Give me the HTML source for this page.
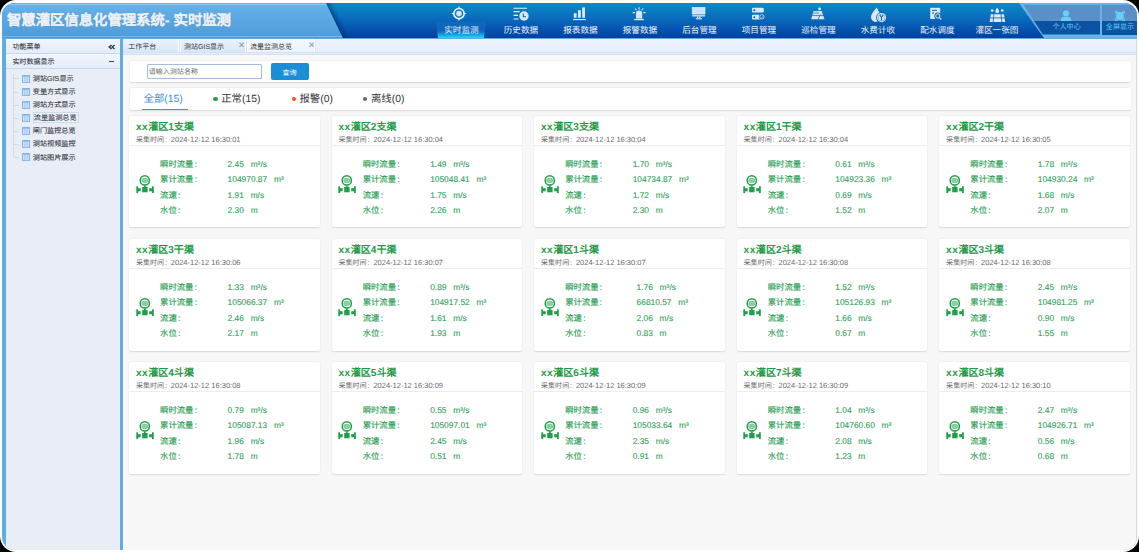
<!DOCTYPE html>
<html lang="zh-CN"><head><meta charset="utf-8">
<style>
*{box-sizing:border-box;margin:0;padding:0}
html,body{width:1139px;height:552px;overflow:hidden;background:#000;font-family:"Liberation Sans",sans-serif;text-rendering:geometricPrecision}
.abs{position:absolute}
#frame{position:absolute;left:0;top:0;width:1139px;height:552px;background:#fff;border-radius:16px}
#app{position:absolute;left:2px;top:3px;width:1135px;height:547px;border-radius:13px;overflow:hidden;background:#62ace4}
#hdr{position:absolute;left:0;top:0;width:1135px;height:35px;background:linear-gradient(#0a8cc8,#0a6abc 45%,#0040a2)}
#ttl{position:absolute;left:0;top:0;width:345px;height:35px;background:linear-gradient(#66b2ea,#4f9bd9);clip-path:polygon(0 0,324px 0,341px 35px,0 35px)}
#ttl:before{content:"";position:absolute;left:0;top:1px;width:100%;height:1px;background:#8cc8f4}
#ttl:after{content:"";position:absolute;left:0;top:32.6px;width:100%;height:1px;background:#70b8ee}
#shadow{position:absolute;left:0;top:0}
#ttxt{position:absolute;left:5px;top:6.4px;font-size:14.35px;font-weight:bold;color:#eaf0f6;white-space:nowrap;letter-spacing:0;-webkit-text-stroke:.12px #eaf0f6;text-shadow:0 0 1px rgba(40,90,150,.5)}
.nav{position:absolute;top:0;width:60px;height:35px;text-align:center;color:#eaf2fb}
.nav .t{position:absolute;left:0;width:100%;top:22.4px;font-size:8.6px;line-height:10px;white-space:nowrap}
.nav svg{position:absolute;left:21px;top:3px}
#act{position:absolute;left:434px;top:19px;width:50px;height:16px;background:linear-gradient(rgba(60,160,230,.12) 0,rgba(40,150,225,.3) 55%,#1ab4ec 86%,#10e0fb 100%);clip-path:polygon(0 0,50px 0,48px 16px,2px 16px)}
#rsec{position:absolute;left:1017px;top:0;width:118px;height:35px;background:#6ab2ea;clip-path:polygon(0 0,118px 0,118px 35px,25px 35px)}
.rp{position:absolute;top:2px;height:30px}
.rp .up{position:absolute;left:0;top:0;width:100%;height:16px;background:#5a8fc8}
.rp .dn{position:absolute;left:0;top:16px;width:100%;height:14px;background:#0c52a2}
.rp .t{position:absolute;left:0;width:100%;top:18.4px;font-size:7.1px;line-height:9px;color:#62ccf2;text-align:center;white-space:nowrap}
/* sidebar */
#side{position:absolute;left:4px;top:35.5px;width:114px;height:512px;background:#e9eef6}
.sh{position:absolute;left:0;width:114px;height:15px;background:linear-gradient(#f2f6fd,#e3ecf8);border-bottom:1px solid #c4d8f0;font-size:7px;color:#262a30;font-weight:normal;-webkit-text-stroke:0.05px #262a30}
.sh span{position:absolute;left:6.5px;top:4.3px;line-height:9px}
.tree{position:absolute;left:0;top:34px;width:114px}
.ti{position:absolute;left:14px;height:11px;font-size:7.15px;line-height:11px;color:#2e3136;white-space:nowrap;-webkit-text-stroke:.08px #2e3136}
.ti span{position:absolute;left:12.8px;top:0.8px}
.ti svg{position:absolute;left:2px;top:1.6px}
/* content */
#cont{position:absolute;left:121px;top:35.5px;width:1014px;height:512px;background:#f7f7f7;border-right:1px solid #c8dcf4}
#tabs{position:absolute;left:0;top:0;width:1013px;height:16px;background:linear-gradient(#d2e2f7,#d2e2f7) 0 13px/100% 1px no-repeat,linear-gradient(#e4edf6,#e4edf6) 0 14px/100% 1px no-repeat,linear-gradient(#d4e3f4,#d4e3f4) 0 15px/100% 1px no-repeat,linear-gradient(#ecf2fc,#e6effb) 0 0/100% 13px no-repeat}
.tab{position:absolute;top:0;height:13px;font-size:7px;line-height:9px;color:#333;white-space:nowrap}
.tab span{position:absolute;top:4px}
.tab .x{position:absolute;top:2px;font-size:7px;color:#7a9aa8}
.card{position:absolute;background:#fff;border-radius:2px;box-shadow:0 0.5px 1.5px rgba(0,0,0,.12)}
#srch{left:6.5px;top:22.4px;width:1001px;height:21px}
#inp{position:absolute;left:17.5px;top:3px;width:115px;height:15px;border:1px solid #a3bde0;border-radius:1px;background:#fff;font-size:7.1px;line-height:15.5px;color:#707070;padding-left:0.5px}
#btn{position:absolute;left:141px;top:1.8px;width:38px;height:17.5px;background:#1b8ed8;border-radius:2px;color:#fff;font-size:7.1px;line-height:20px;text-align:center}
#stat{left:6.5px;top:49.3px;width:1001px;height:22px}
.st{position:absolute;top:5.7px;font-size:10.4px;line-height:13px;color:#333;white-space:nowrap}
.dot{display:inline-block;width:4.4px;height:4.4px;border-radius:50%;vertical-align:1.5px;margin-right:3.5px}
#ul{position:absolute;left:12px;top:20.8px;width:46px;height:1.6px;background:#3a92e8}
.c{width:190.5px;height:111.3px}
.c .h{position:absolute;left:6.8px;top:4.4px;font-size:10.05px;line-height:13px;font-weight:bold;color:#1f9a48;white-space:nowrap}
.c .tm{position:absolute;left:6.8px;top:18.9px;font-size:7.05px;line-height:9px;color:#6a6a6a;white-space:nowrap}
.c .ln{position:absolute;left:0;top:28.6px;width:100%;height:1px;background:#ededed}
.c .lb{position:absolute;left:31px;font-size:8.35px;line-height:10px;color:#2c9f56;white-space:nowrap;-webkit-text-stroke:.15px #2c9f56}
.c .vl{position:absolute;left:98.5px;font-size:8.4px;line-height:10px;color:#2c9f56;white-space:nowrap;-webkit-text-stroke:.1px #2c9f56}
.c svg{position:absolute;left:6.6px;top:59.2px}
</style></head><body>
<div id="frame"></div>
<div id="app">
  <div id="hdr"></div>
  <div id="ttl"></div>
  <svg id="shadow" width="380" height="35"><polygon points="324.0,0 325.45,0 342.45,35 341.0,35" fill="rgba(0,25,85,0.42)"/><polygon points="325.4,0 326.85,0 343.85,35 342.4,35" fill="rgba(0,25,85,0.3)"/><polygon points="326.8,0 328.25,0 345.25,35 343.8,35" fill="rgba(0,25,85,0.2)"/><polygon points="328.2,0 329.65,0 346.65,35 345.2,35" fill="rgba(0,25,85,0.12)"/><polygon points="329.6,0 331.05,0 348.05,35 346.6,35" fill="rgba(0,25,85,0.05)"/></svg>
  <div id="ttxt">智慧灌区信息化管理系统- 实时监测</div>
  <div id="act"></div>
  <div class="nav" style="left:429.4px"><div class="t">实时监测</div></div>
<div class="nav" style="left:488.9px"><div class="t">历史数据</div></div>
<div class="nav" style="left:548.4px"><div class="t">报表数据</div></div>
<div class="nav" style="left:607.9px"><div class="t">报警数据</div></div>
<div class="nav" style="left:667.4px"><div class="t">后台管理</div></div>
<div class="nav" style="left:726.9px"><div class="t">项目管理</div></div>
<div class="nav" style="left:786.4px"><div class="t">巡检管理</div></div>
<div class="nav" style="left:845.9px"><div class="t">水费计收</div></div>
<div class="nav" style="left:905.4px"><div class="t">配水调度</div></div>
<div class="nav" style="left:964.9px"><div class="t">灌区一张图</div></div>

  <div id="rsec"></div>
  <div class="rp" style="left:1020px;width:78px;clip-path:polygon(1.6px 0,78px 0,78px 29.5px,20.8px 29.5px)"><div class="up"></div><div class="dn"></div><div class="t" style="left:5.6px;width:78px">个人中心</div>
</div>
<div class="rp" style="left:1100px;width:40px"><div class="up"></div><div class="dn"></div><div class="t" style="left:-2px;width:40px">全屏显示</div>
</div>

  <svg class="abs" style="left:0;top:0" width="1135" height="35"><g transform="translate(-2,-3)">
<circle cx="459" cy="13.6" r="5.1" fill="none" stroke="#e6f0fa" stroke-width="1.7"/><circle cx="459" cy="13.6" r="2.8" fill="#d2e4f6"/>
<path d="M457.9 8.6L459 6L460.1 8.6ZM457.9 18.6L459 21.2L460.1 18.6ZM454 12.5L451.3 13.6L454 14.7ZM464 12.5L466.7 13.6L464 14.7Z" fill="#e6f0fa"/>
<path d="M513.6 8.2H527M513.6 11.6H519.6M513.6 15.3H518M513.6 19H518.6" stroke="#e6f0fa" stroke-width="1.15"/>
<circle cx="524" cy="16" r="4.7" fill="#dceaf8"/><path d="M523.3 13.6V16.7H525.9" stroke="#0a62b4" stroke-width="1.1" fill="none"/>
<rect x="573.8" y="13.2" width="2.8" height="4.6" fill="#dceaf8"/><rect x="578" y="10.2" width="2.8" height="7.6" fill="#dceaf8"/><rect x="582.2" y="7.4" width="2.8" height="10.4" fill="#dceaf8"/><rect x="573" y="19" width="12.8" height="1.1" fill="#dceaf8"/>
<path d="M636 18.4V13.6A3.1 3.1 0 0 1 642.2 13.6V18.4Z" fill="#d6e7f8"/><rect x="634.2" y="18.9" width="9.6" height="1.3" fill="#e6f0fa"/>
<path d="M639.1 7.2V9.6M635.2 8.5L636.4 10.3M643 8.5L641.8 10.3M632.7 12.6H634.9M643.3 12.6H645.5" stroke="#e6f0fa" stroke-width="1.1"/>
<rect x="692.2" y="7.4" width="12.8" height="6.6" fill="#d0e4f7" stroke="#e8f2fb" stroke-width=".6"/><rect x="692.2" y="14.7" width="12.8" height="1.9" fill="#b9d6f0"/>
<rect x="697" y="16.6" width="3.6" height="1.7" fill="#dceaf8"/><rect x="698.2" y="16.9" width="1.2" height="1" fill="#1a70c0"/><rect x="695.8" y="18.2" width="6.2" height="1.1" fill="#dceaf8"/>
<rect x="752" y="7.8" width="11.8" height="4.8" rx="1.1" fill="#dceaf8"/><circle cx="754.3" cy="10.2" r="1.05" fill="#0a62b4"/>
<rect x="752" y="14.8" width="11.8" height="4.8" rx="1.1" fill="#dceaf8"/><circle cx="754.3" cy="17.2" r="1.05" fill="#0a62b4"/>
<circle cx="761.9" cy="16.8" r="3.2" fill="#0a66b6"/><circle cx="761.9" cy="16.8" r="2.2" fill="none" stroke="#dceaf8" stroke-width=".8"/><path d="M760.9 16.9l.8.8 1.4-1.5" stroke="#dceaf8" stroke-width=".6" fill="none"/>
<circle cx="819.6" cy="8.9" r="1.35" fill="#e6f0fa"/><path d="M811.2 19.2L813.4 11H821.6L824.5 19.2Z" fill="#dceaf8"/>
<path d="M811 13.1H819.2M811 15.6H824" stroke="#0a70bc" stroke-width=".8"/><path d="M821 14.3L817.6 19.6" stroke="#0a6ab8" stroke-width=".8"/><path d="M812.6 11H818.8" stroke="#0a70bc" stroke-width=".3"/>
<path d="M876.6 7.6C872.8 12.3 871 15 871 17.3A4.6 4.6 0 0 0 875.6 21.9A4.6 4.6 0 0 0 880.2 17.3C880.2 15 879.5 12.3 876.6 7.6Z" fill="#d8e8f8"/>
<circle cx="881.5" cy="17.6" r="5.4" fill="#0a68b8"/><circle cx="881.5" cy="17.6" r="4.6" fill="#dceaf8"/><circle cx="881.5" cy="17.6" r="3.4" fill="none" stroke="#3a88c8" stroke-width=".5"/>
<path d="M879.8 15.1L881.5 17.2L883.2 15.1M881.5 17V20.5" stroke="#0a68b8" stroke-width="1.15" fill="none"/>
<rect x="930.2" y="7.8" width="10" height="11.2" fill="#dceaf8"/><path d="M932 10.4H937M932 13H934.2" stroke="#0a62b4" stroke-width="1"/>
<circle cx="937.8" cy="16" r="3.5" fill="#0a6ab8"/><circle cx="937.8" cy="16" r="2.1" fill="none" stroke="#dceaf8" stroke-width="1"/><path d="M939.4 17.6L941.3 19.5" stroke="#dceaf8" stroke-width="1.1"/>
<circle cx="992.2" cy="10.5" r="1.35" fill="#dceaf8"/><circle cx="1002.2" cy="10.5" r="1.35" fill="#dceaf8"/>
<path d="M997.2 7.4C996 9 995.3 10.2 995.3 11.2A1.9 1.9 0 0 0 999.1 11.2C999.1 10.2 998.4 9 997.2 7.4Z" fill="#dceaf8"/>
<path d="M990.8 14.2H1004L1005.2 22H989.6Z" fill="#dceaf8"/><path d="M989.5 17.9H1005.4" stroke="#0a62b4" stroke-width=".8"/><path d="M993.8 14.2L993.2 22M1001 14.2L1001.8 22" stroke="#0a62b4" stroke-width=".8"/>
<circle cx="1066" cy="13.3" r="3.1" fill="#68d0f6"/><path d="M1061 21.1V19.6C1061 17.9 1062.6 16.8 1064.2 16.8H1067.9C1069.5 16.8 1071.1 17.9 1071.1 19.6V21.1Z" fill="#68d0f6"/>
<rect x="1116.2" y="12" width="7.4" height="7.8" fill="#68d0f6"/><path d="M1115.3 13.3V11.1H1117.6M1122.2 11.1H1124.5V13.3M1124.5 18.5V20.7H1122.2M1117.6 20.7H1115.3V18.5" stroke="#68d0f6" stroke-width=".9" fill="none"/>
</g></svg>
  <div id="side">
    <div class="sh" style="top:0"><span>功能菜单</span><svg class="abs" style="left:102px;top:5px" width="8" height="6" viewBox="0 0 8 6"><path d="M3.6 1L1.2 3L3.6 5M6.6 1L4.2 3L6.6 5" stroke="#1d4a56" stroke-width="1.5" fill="none"/></svg></div>
    <div class="sh" style="top:15.5px"><span>实时数据显示</span><b style="position:absolute;left:103px;top:6.5px;width:5px;height:1.5px;background:#2a4a55"></b></div>
    <div class="abs" style="left:6.5px;top:35px;width:1.2px;height:83.4px;background:#d6dbe3"></div>
<div class="abs" style="left:7.7px;top:39.9px;width:5.6px;height:1px;background:#d6dbe3"></div>
<div class="ti" style="top:34.9px"><svg width="8" height="8" viewBox="0 0 8 8"><rect x="0" y="0" width="8" height="8" rx=".5" fill="#7fb2e6"/><rect x="1" y="1.6" width="1.6" height="5.6" fill="#d2e3f6"/><rect x="3.2" y="1.6" width="1.6" height="5.6" fill="#d2e3f6"/><rect x="5.4" y="1.6" width="1.6" height="5.6" fill="#d2e3f6"/></svg><span style="">测站GIS显示</span></div>
<div class="abs" style="left:7.7px;top:53.0px;width:5.6px;height:1px;background:#d6dbe3"></div>
<div class="ti" style="top:48.0px"><svg width="8" height="8" viewBox="0 0 8 8"><rect x="0" y="0" width="8" height="8" rx=".5" fill="#7fb2e6"/><rect x="1" y="1.6" width="1.6" height="5.6" fill="#d2e3f6"/><rect x="3.2" y="1.6" width="1.6" height="5.6" fill="#d2e3f6"/><rect x="5.4" y="1.6" width="1.6" height="5.6" fill="#d2e3f6"/></svg><span style="">变量方式显示</span></div>
<div class="abs" style="left:7.7px;top:66.0px;width:5.6px;height:1px;background:#d6dbe3"></div>
<div class="ti" style="top:61.0px"><svg width="8" height="8" viewBox="0 0 8 8"><rect x="0" y="0" width="8" height="8" rx=".5" fill="#7fb2e6"/><rect x="1" y="1.6" width="1.6" height="5.6" fill="#d2e3f6"/><rect x="3.2" y="1.6" width="1.6" height="5.6" fill="#d2e3f6"/><rect x="5.4" y="1.6" width="1.6" height="5.6" fill="#d2e3f6"/></svg><span style="">测站方式显示</span></div>
<div class="abs" style="left:7.7px;top:79.1px;width:5.6px;height:1px;background:#d6dbe3"></div>
<div class="abs" style="left:27px;top:73.8px;width:46px;height:11px;background:#eef4fc;border:1px solid #c9d9ee"></div>
<div class="ti" style="top:74.1px"><svg width="8" height="8" viewBox="0 0 8 8"><rect x="0" y="0" width="8" height="8" rx=".5" fill="#7fb2e6"/><rect x="1" y="1.6" width="1.6" height="5.6" fill="#d2e3f6"/><rect x="3.2" y="1.6" width="1.6" height="5.6" fill="#d2e3f6"/><rect x="5.4" y="1.6" width="1.6" height="5.6" fill="#d2e3f6"/></svg><span style=";margin-left:1px">流量监测总览</span></div>
<div class="abs" style="left:7.7px;top:92.2px;width:5.6px;height:1px;background:#d6dbe3"></div>
<div class="ti" style="top:87.2px"><svg width="8" height="8" viewBox="0 0 8 8"><rect x="0" y="0" width="8" height="8" rx=".5" fill="#7fb2e6"/><rect x="1" y="1.6" width="1.6" height="5.6" fill="#d2e3f6"/><rect x="3.2" y="1.6" width="1.6" height="5.6" fill="#d2e3f6"/><rect x="5.4" y="1.6" width="1.6" height="5.6" fill="#d2e3f6"/></svg><span style="">闸门监控总览</span></div>
<div class="abs" style="left:7.7px;top:105.2px;width:5.6px;height:1px;background:#d6dbe3"></div>
<div class="ti" style="top:100.2px"><svg width="8" height="8" viewBox="0 0 8 8"><rect x="0" y="0" width="8" height="8" rx=".5" fill="#7fb2e6"/><rect x="1" y="1.6" width="1.6" height="5.6" fill="#d2e3f6"/><rect x="3.2" y="1.6" width="1.6" height="5.6" fill="#d2e3f6"/><rect x="5.4" y="1.6" width="1.6" height="5.6" fill="#d2e3f6"/></svg><span style="">测站视频监控</span></div>
<div class="abs" style="left:7.7px;top:118.3px;width:5.6px;height:1px;background:#d6dbe3"></div>
<div class="ti" style="top:113.3px"><svg width="8" height="8" viewBox="0 0 8 8"><rect x="0" y="0" width="8" height="8" rx=".5" fill="#7fb2e6"/><rect x="1" y="1.6" width="1.6" height="5.6" fill="#d2e3f6"/><rect x="3.2" y="1.6" width="1.6" height="5.6" fill="#d2e3f6"/><rect x="5.4" y="1.6" width="1.6" height="5.6" fill="#d2e3f6"/></svg><span style="">测站图片展示</span></div>

  </div>
  <div id="cont">
    <div id="tabs"><div class="tab" style="left:0;width:55px;background:linear-gradient(#eaf2fc,#d9e6f8)"><span style="left:5.2px">工作平台</span></div>
<div class="abs" style="left:55px;top:.5px;width:3px;height:12.8px;border-left:1px solid #fbfdff;border-right:1px solid #fbfdff;background:#d3e1f3"></div>
<div class="tab" style="left:58px;width:63.5px;background:linear-gradient(#eaf2fc,#d9e6f8)"><span style="left:3px">测站GIS显示</span></div><svg class="abs" style="left:116px;top:3.5px" width="6" height="6" viewBox="0 0 6 6"><path d="M.5 .6L4.7 4.9M4.7 .6L.5 4.9" stroke="#86a9aa" stroke-width="1.2"/></svg>
<div class="abs" style="left:121.5px;top:.5px;width:3px;height:12.8px;border-left:1px solid #fbfdff;border-right:1px solid #fbfdff;background:#d3e1f3"></div>
<div class="tab" style="left:124.5px;width:67px;background:linear-gradient(#f4f8fe,#edf3fc);border-right:1px solid #fff"><span style="left:2.5px">流量监测总览</span></div><svg class="abs" style="left:185.5px;top:3.5px" width="6" height="6" viewBox="0 0 6 6"><path d="M.5 .6L4.7 4.9M4.7 .6L.5 4.9" stroke="#86a9aa" stroke-width="1.2"/></svg>
<div class="abs" style="left:191.5px;top:0;width:1px;height:13px;background:#d8e5f5"></div>
</div>
    <div class="card" id="srch"><div id="inp">请输入测站名称</div><div id="btn">查询</div></div>
    <div class="card" id="stat">
      <div class="st" style="left:14px;color:#3a8fe6">全部(15)</div>
      <div class="st" style="left:83.8px"><i class="dot" style="background:#22a04a"></i>正常(15)</div>
      <div class="st" style="left:162px"><i class="dot" style="background:#f0521e"></i>报警(0)</div>
      <div class="st" style="left:233.5px"><i class="dot" style="background:#666"></i>离线(0)</div>
      <div id="ul"></div>
    </div>
    <div class="card c" style="left:6.10px;top:77.70px"><div class="h"><span style="letter-spacing:.55px">xx</span>灌区1支渠</div><div class="tm">采集时间<span style="margin-left:.9px">:</span><span style="font-size:7.5px;margin-left:3.9px">2024-12-12 16:30:01</span></div><div class="ln"></div><svg width="20" height="20" viewBox="0 0 20 20"><circle cx="8.8" cy="5.4" r="4.6" fill="#fff" stroke="#1ea04a" stroke-width="1.5"/><rect x="5.9" y="3.5" width="5.8" height="3.9" rx="1.3" fill="#c6e8cf" stroke="#1ea04a" stroke-width=".5"/><path d="M6.6 4.9h4.4M6.6 6.1h4.4" stroke="#1ea04a" stroke-width=".5"/><rect x="7.9" y="10.4" width="1.8" height="1.8" fill="#1ea04a"/><rect x="6.2" y="12" width="5.4" height="5.3" fill="#1ea04a"/><rect x="1.8" y="13.2" width="2.9" height="3.1" fill="#1ea04a"/><rect x="13.2" y="13.2" width="2.9" height="3.1" fill="#1ea04a"/><rect x="0.3" y="11.3" width="1.8" height="6.8" fill="#1ea04a"/><rect x="16" y="11.3" width="1.8" height="6.8" fill="#1ea04a"/></svg>
<div class="lb" style="top:42.7px">瞬时流量<span style="margin-left:1.3px">:</span></div><div class="vl" style="top:42.7px;left:98.5px">2.45&nbsp;<span style="margin-left:4.4px">m</span>³/s</div>
<div class="lb" style="top:58px">累计流量<span style="margin-left:1.3px">:</span></div><div class="vl" style="top:58px;left:98.5px">104970.87&nbsp;<span style="margin-left:4.4px">m</span>³</div>
<div class="lb" style="top:73.8px">流速<span style="margin-left:1.3px">:</span></div><div class="vl" style="top:73.8px;left:98.5px">1.91&nbsp;<span style="margin-left:4.4px">m</span>/s</div>
<div class="lb" style="top:89.2px">水位<span style="margin-left:1.3px">:</span></div><div class="vl" style="top:89.2px;left:98.5px">2.30&nbsp;<span style="margin-left:4.4px">m</span></div></div>
<div class="card c" style="left:208.65px;top:77.70px"><div class="h"><span style="letter-spacing:.55px">xx</span>灌区2支渠</div><div class="tm">采集时间<span style="margin-left:.9px">:</span><span style="font-size:7.5px;margin-left:3.9px">2024-12-12 16:30:04</span></div><div class="ln"></div><svg width="20" height="20" viewBox="0 0 20 20"><circle cx="8.8" cy="5.4" r="4.6" fill="#fff" stroke="#1ea04a" stroke-width="1.5"/><rect x="5.9" y="3.5" width="5.8" height="3.9" rx="1.3" fill="#c6e8cf" stroke="#1ea04a" stroke-width=".5"/><path d="M6.6 4.9h4.4M6.6 6.1h4.4" stroke="#1ea04a" stroke-width=".5"/><rect x="7.9" y="10.4" width="1.8" height="1.8" fill="#1ea04a"/><rect x="6.2" y="12" width="5.4" height="5.3" fill="#1ea04a"/><rect x="1.8" y="13.2" width="2.9" height="3.1" fill="#1ea04a"/><rect x="13.2" y="13.2" width="2.9" height="3.1" fill="#1ea04a"/><rect x="0.3" y="11.3" width="1.8" height="6.8" fill="#1ea04a"/><rect x="16" y="11.3" width="1.8" height="6.8" fill="#1ea04a"/></svg>
<div class="lb" style="top:42.7px">瞬时流量<span style="margin-left:1.3px">:</span></div><div class="vl" style="top:42.7px;left:98.5px">1.49&nbsp;<span style="margin-left:4.4px">m</span>³/s</div>
<div class="lb" style="top:58px">累计流量<span style="margin-left:1.3px">:</span></div><div class="vl" style="top:58px;left:98.5px">105048.41&nbsp;<span style="margin-left:4.4px">m</span>³</div>
<div class="lb" style="top:73.8px">流速<span style="margin-left:1.3px">:</span></div><div class="vl" style="top:73.8px;left:98.5px">1.75&nbsp;<span style="margin-left:4.4px">m</span>/s</div>
<div class="lb" style="top:89.2px">水位<span style="margin-left:1.3px">:</span></div><div class="vl" style="top:89.2px;left:98.5px">2.26&nbsp;<span style="margin-left:4.4px">m</span></div></div>
<div class="card c" style="left:411.20px;top:77.70px"><div class="h"><span style="letter-spacing:.55px">xx</span>灌区3支渠</div><div class="tm">采集时间<span style="margin-left:.9px">:</span><span style="font-size:7.5px;margin-left:3.9px">2024-12-12 16:30:04</span></div><div class="ln"></div><svg width="20" height="20" viewBox="0 0 20 20"><circle cx="8.8" cy="5.4" r="4.6" fill="#fff" stroke="#1ea04a" stroke-width="1.5"/><rect x="5.9" y="3.5" width="5.8" height="3.9" rx="1.3" fill="#c6e8cf" stroke="#1ea04a" stroke-width=".5"/><path d="M6.6 4.9h4.4M6.6 6.1h4.4" stroke="#1ea04a" stroke-width=".5"/><rect x="7.9" y="10.4" width="1.8" height="1.8" fill="#1ea04a"/><rect x="6.2" y="12" width="5.4" height="5.3" fill="#1ea04a"/><rect x="1.8" y="13.2" width="2.9" height="3.1" fill="#1ea04a"/><rect x="13.2" y="13.2" width="2.9" height="3.1" fill="#1ea04a"/><rect x="0.3" y="11.3" width="1.8" height="6.8" fill="#1ea04a"/><rect x="16" y="11.3" width="1.8" height="6.8" fill="#1ea04a"/></svg>
<div class="lb" style="top:42.7px">瞬时流量<span style="margin-left:1.3px">:</span></div><div class="vl" style="top:42.7px;left:98.5px">1.70&nbsp;<span style="margin-left:4.4px">m</span>³/s</div>
<div class="lb" style="top:58px">累计流量<span style="margin-left:1.3px">:</span></div><div class="vl" style="top:58px;left:98.5px">104734.87&nbsp;<span style="margin-left:4.4px">m</span>³</div>
<div class="lb" style="top:73.8px">流速<span style="margin-left:1.3px">:</span></div><div class="vl" style="top:73.8px;left:98.5px">1.72&nbsp;<span style="margin-left:4.4px">m</span>/s</div>
<div class="lb" style="top:89.2px">水位<span style="margin-left:1.3px">:</span></div><div class="vl" style="top:89.2px;left:98.5px">2.30&nbsp;<span style="margin-left:4.4px">m</span></div></div>
<div class="card c" style="left:613.75px;top:77.70px"><div class="h"><span style="letter-spacing:.55px">xx</span>灌区1干渠</div><div class="tm">采集时间<span style="margin-left:.9px">:</span><span style="font-size:7.5px;margin-left:3.9px">2024-12-12 16:30:04</span></div><div class="ln"></div><svg width="20" height="20" viewBox="0 0 20 20"><circle cx="8.8" cy="5.4" r="4.6" fill="#fff" stroke="#1ea04a" stroke-width="1.5"/><rect x="5.9" y="3.5" width="5.8" height="3.9" rx="1.3" fill="#c6e8cf" stroke="#1ea04a" stroke-width=".5"/><path d="M6.6 4.9h4.4M6.6 6.1h4.4" stroke="#1ea04a" stroke-width=".5"/><rect x="7.9" y="10.4" width="1.8" height="1.8" fill="#1ea04a"/><rect x="6.2" y="12" width="5.4" height="5.3" fill="#1ea04a"/><rect x="1.8" y="13.2" width="2.9" height="3.1" fill="#1ea04a"/><rect x="13.2" y="13.2" width="2.9" height="3.1" fill="#1ea04a"/><rect x="0.3" y="11.3" width="1.8" height="6.8" fill="#1ea04a"/><rect x="16" y="11.3" width="1.8" height="6.8" fill="#1ea04a"/></svg>
<div class="lb" style="top:42.7px">瞬时流量<span style="margin-left:1.3px">:</span></div><div class="vl" style="top:42.7px;left:98.5px">0.61&nbsp;<span style="margin-left:4.4px">m</span>³/s</div>
<div class="lb" style="top:58px">累计流量<span style="margin-left:1.3px">:</span></div><div class="vl" style="top:58px;left:98.5px">104923.36&nbsp;<span style="margin-left:4.4px">m</span>³</div>
<div class="lb" style="top:73.8px">流速<span style="margin-left:1.3px">:</span></div><div class="vl" style="top:73.8px;left:98.5px">0.69&nbsp;<span style="margin-left:4.4px">m</span>/s</div>
<div class="lb" style="top:89.2px">水位<span style="margin-left:1.3px">:</span></div><div class="vl" style="top:89.2px;left:98.5px">1.52&nbsp;<span style="margin-left:4.4px">m</span></div></div>
<div class="card c" style="left:816.30px;top:77.70px"><div class="h"><span style="letter-spacing:.55px">xx</span>灌区2干渠</div><div class="tm">采集时间<span style="margin-left:.9px">:</span><span style="font-size:7.5px;margin-left:3.9px">2024-12-12 16:30:05</span></div><div class="ln"></div><svg width="20" height="20" viewBox="0 0 20 20"><circle cx="8.8" cy="5.4" r="4.6" fill="#fff" stroke="#1ea04a" stroke-width="1.5"/><rect x="5.9" y="3.5" width="5.8" height="3.9" rx="1.3" fill="#c6e8cf" stroke="#1ea04a" stroke-width=".5"/><path d="M6.6 4.9h4.4M6.6 6.1h4.4" stroke="#1ea04a" stroke-width=".5"/><rect x="7.9" y="10.4" width="1.8" height="1.8" fill="#1ea04a"/><rect x="6.2" y="12" width="5.4" height="5.3" fill="#1ea04a"/><rect x="1.8" y="13.2" width="2.9" height="3.1" fill="#1ea04a"/><rect x="13.2" y="13.2" width="2.9" height="3.1" fill="#1ea04a"/><rect x="0.3" y="11.3" width="1.8" height="6.8" fill="#1ea04a"/><rect x="16" y="11.3" width="1.8" height="6.8" fill="#1ea04a"/></svg>
<div class="lb" style="top:42.7px">瞬时流量<span style="margin-left:1.3px">:</span></div><div class="vl" style="top:42.7px;left:98.5px">1.78&nbsp;<span style="margin-left:4.4px">m</span>³/s</div>
<div class="lb" style="top:58px">累计流量<span style="margin-left:1.3px">:</span></div><div class="vl" style="top:58px;left:98.5px">104930.24&nbsp;<span style="margin-left:4.4px">m</span>³</div>
<div class="lb" style="top:73.8px">流速<span style="margin-left:1.3px">:</span></div><div class="vl" style="top:73.8px;left:98.5px">1.68&nbsp;<span style="margin-left:4.4px">m</span>/s</div>
<div class="lb" style="top:89.2px">水位<span style="margin-left:1.3px">:</span></div><div class="vl" style="top:89.2px;left:98.5px">2.07&nbsp;<span style="margin-left:4.4px">m</span></div></div>
<div class="card c" style="left:6.10px;top:200.75px"><div class="h"><span style="letter-spacing:.55px">xx</span>灌区3干渠</div><div class="tm">采集时间<span style="margin-left:.9px">:</span><span style="font-size:7.5px;margin-left:3.9px">2024-12-12 16:30:06</span></div><div class="ln"></div><svg width="20" height="20" viewBox="0 0 20 20"><circle cx="8.8" cy="5.4" r="4.6" fill="#fff" stroke="#1ea04a" stroke-width="1.5"/><rect x="5.9" y="3.5" width="5.8" height="3.9" rx="1.3" fill="#c6e8cf" stroke="#1ea04a" stroke-width=".5"/><path d="M6.6 4.9h4.4M6.6 6.1h4.4" stroke="#1ea04a" stroke-width=".5"/><rect x="7.9" y="10.4" width="1.8" height="1.8" fill="#1ea04a"/><rect x="6.2" y="12" width="5.4" height="5.3" fill="#1ea04a"/><rect x="1.8" y="13.2" width="2.9" height="3.1" fill="#1ea04a"/><rect x="13.2" y="13.2" width="2.9" height="3.1" fill="#1ea04a"/><rect x="0.3" y="11.3" width="1.8" height="6.8" fill="#1ea04a"/><rect x="16" y="11.3" width="1.8" height="6.8" fill="#1ea04a"/></svg>
<div class="lb" style="top:42.7px">瞬时流量<span style="margin-left:1.3px">:</span></div><div class="vl" style="top:42.7px;left:98.5px">1.33&nbsp;<span style="margin-left:4.4px">m</span>³/s</div>
<div class="lb" style="top:58px">累计流量<span style="margin-left:1.3px">:</span></div><div class="vl" style="top:58px;left:98.5px">105066.37&nbsp;<span style="margin-left:4.4px">m</span>³</div>
<div class="lb" style="top:73.8px">流速<span style="margin-left:1.3px">:</span></div><div class="vl" style="top:73.8px;left:98.5px">2.46&nbsp;<span style="margin-left:4.4px">m</span>/s</div>
<div class="lb" style="top:89.2px">水位<span style="margin-left:1.3px">:</span></div><div class="vl" style="top:89.2px;left:98.5px">2.17&nbsp;<span style="margin-left:4.4px">m</span></div></div>
<div class="card c" style="left:208.65px;top:200.75px"><div class="h"><span style="letter-spacing:.55px">xx</span>灌区4干渠</div><div class="tm">采集时间<span style="margin-left:.9px">:</span><span style="font-size:7.5px;margin-left:3.9px">2024-12-12 16:30:07</span></div><div class="ln"></div><svg width="20" height="20" viewBox="0 0 20 20"><circle cx="8.8" cy="5.4" r="4.6" fill="#fff" stroke="#1ea04a" stroke-width="1.5"/><rect x="5.9" y="3.5" width="5.8" height="3.9" rx="1.3" fill="#c6e8cf" stroke="#1ea04a" stroke-width=".5"/><path d="M6.6 4.9h4.4M6.6 6.1h4.4" stroke="#1ea04a" stroke-width=".5"/><rect x="7.9" y="10.4" width="1.8" height="1.8" fill="#1ea04a"/><rect x="6.2" y="12" width="5.4" height="5.3" fill="#1ea04a"/><rect x="1.8" y="13.2" width="2.9" height="3.1" fill="#1ea04a"/><rect x="13.2" y="13.2" width="2.9" height="3.1" fill="#1ea04a"/><rect x="0.3" y="11.3" width="1.8" height="6.8" fill="#1ea04a"/><rect x="16" y="11.3" width="1.8" height="6.8" fill="#1ea04a"/></svg>
<div class="lb" style="top:42.7px">瞬时流量<span style="margin-left:1.3px">:</span></div><div class="vl" style="top:42.7px;left:98.5px">0.89&nbsp;<span style="margin-left:4.4px">m</span>³/s</div>
<div class="lb" style="top:58px">累计流量<span style="margin-left:1.3px">:</span></div><div class="vl" style="top:58px;left:98.5px">104917.52&nbsp;<span style="margin-left:4.4px">m</span>³</div>
<div class="lb" style="top:73.8px">流速<span style="margin-left:1.3px">:</span></div><div class="vl" style="top:73.8px;left:98.5px">1.61&nbsp;<span style="margin-left:4.4px">m</span>/s</div>
<div class="lb" style="top:89.2px">水位<span style="margin-left:1.3px">:</span></div><div class="vl" style="top:89.2px;left:98.5px">1.93&nbsp;<span style="margin-left:4.4px">m</span></div></div>
<div class="card c" style="left:411.20px;top:200.75px"><div class="h"><span style="letter-spacing:.55px">xx</span>灌区1斗渠</div><div class="tm">采集时间<span style="margin-left:.9px">:</span><span style="font-size:7.5px;margin-left:3.9px">2024-12-12 16:30:07</span></div><div class="ln"></div><svg width="20" height="20" viewBox="0 0 20 20"><circle cx="8.8" cy="5.4" r="4.6" fill="#fff" stroke="#1ea04a" stroke-width="1.5"/><rect x="5.9" y="3.5" width="5.8" height="3.9" rx="1.3" fill="#c6e8cf" stroke="#1ea04a" stroke-width=".5"/><path d="M6.6 4.9h4.4M6.6 6.1h4.4" stroke="#1ea04a" stroke-width=".5"/><rect x="7.9" y="10.4" width="1.8" height="1.8" fill="#1ea04a"/><rect x="6.2" y="12" width="5.4" height="5.3" fill="#1ea04a"/><rect x="1.8" y="13.2" width="2.9" height="3.1" fill="#1ea04a"/><rect x="13.2" y="13.2" width="2.9" height="3.1" fill="#1ea04a"/><rect x="0.3" y="11.3" width="1.8" height="6.8" fill="#1ea04a"/><rect x="16" y="11.3" width="1.8" height="6.8" fill="#1ea04a"/></svg>
<div class="lb" style="top:42.7px">瞬时流量<span style="margin-left:1.3px">:</span></div><div class="vl" style="top:42.7px;left:102.4px">1.76&nbsp;<span style="margin-left:4.4px">m</span>³/s</div>
<div class="lb" style="top:58px">累计流量<span style="margin-left:1.3px">:</span></div><div class="vl" style="top:58px;left:102.4px">66810.57&nbsp;<span style="margin-left:4.4px">m</span>³</div>
<div class="lb" style="top:73.8px">流速<span style="margin-left:1.3px">:</span></div><div class="vl" style="top:73.8px;left:102.4px">2.06&nbsp;<span style="margin-left:4.4px">m</span>/s</div>
<div class="lb" style="top:89.2px">水位<span style="margin-left:1.3px">:</span></div><div class="vl" style="top:89.2px;left:102.4px">0.83&nbsp;<span style="margin-left:4.4px">m</span></div></div>
<div class="card c" style="left:613.75px;top:200.75px"><div class="h"><span style="letter-spacing:.55px">xx</span>灌区2斗渠</div><div class="tm">采集时间<span style="margin-left:.9px">:</span><span style="font-size:7.5px;margin-left:3.9px">2024-12-12 16:30:08</span></div><div class="ln"></div><svg width="20" height="20" viewBox="0 0 20 20"><circle cx="8.8" cy="5.4" r="4.6" fill="#fff" stroke="#1ea04a" stroke-width="1.5"/><rect x="5.9" y="3.5" width="5.8" height="3.9" rx="1.3" fill="#c6e8cf" stroke="#1ea04a" stroke-width=".5"/><path d="M6.6 4.9h4.4M6.6 6.1h4.4" stroke="#1ea04a" stroke-width=".5"/><rect x="7.9" y="10.4" width="1.8" height="1.8" fill="#1ea04a"/><rect x="6.2" y="12" width="5.4" height="5.3" fill="#1ea04a"/><rect x="1.8" y="13.2" width="2.9" height="3.1" fill="#1ea04a"/><rect x="13.2" y="13.2" width="2.9" height="3.1" fill="#1ea04a"/><rect x="0.3" y="11.3" width="1.8" height="6.8" fill="#1ea04a"/><rect x="16" y="11.3" width="1.8" height="6.8" fill="#1ea04a"/></svg>
<div class="lb" style="top:42.7px">瞬时流量<span style="margin-left:1.3px">:</span></div><div class="vl" style="top:42.7px;left:98.5px">1.52&nbsp;<span style="margin-left:4.4px">m</span>³/s</div>
<div class="lb" style="top:58px">累计流量<span style="margin-left:1.3px">:</span></div><div class="vl" style="top:58px;left:98.5px">105126.93&nbsp;<span style="margin-left:4.4px">m</span>³</div>
<div class="lb" style="top:73.8px">流速<span style="margin-left:1.3px">:</span></div><div class="vl" style="top:73.8px;left:98.5px">1.66&nbsp;<span style="margin-left:4.4px">m</span>/s</div>
<div class="lb" style="top:89.2px">水位<span style="margin-left:1.3px">:</span></div><div class="vl" style="top:89.2px;left:98.5px">0.67&nbsp;<span style="margin-left:4.4px">m</span></div></div>
<div class="card c" style="left:816.30px;top:200.75px"><div class="h"><span style="letter-spacing:.55px">xx</span>灌区3斗渠</div><div class="tm">采集时间<span style="margin-left:.9px">:</span><span style="font-size:7.5px;margin-left:3.9px">2024-12-12 16:30:08</span></div><div class="ln"></div><svg width="20" height="20" viewBox="0 0 20 20"><circle cx="8.8" cy="5.4" r="4.6" fill="#fff" stroke="#1ea04a" stroke-width="1.5"/><rect x="5.9" y="3.5" width="5.8" height="3.9" rx="1.3" fill="#c6e8cf" stroke="#1ea04a" stroke-width=".5"/><path d="M6.6 4.9h4.4M6.6 6.1h4.4" stroke="#1ea04a" stroke-width=".5"/><rect x="7.9" y="10.4" width="1.8" height="1.8" fill="#1ea04a"/><rect x="6.2" y="12" width="5.4" height="5.3" fill="#1ea04a"/><rect x="1.8" y="13.2" width="2.9" height="3.1" fill="#1ea04a"/><rect x="13.2" y="13.2" width="2.9" height="3.1" fill="#1ea04a"/><rect x="0.3" y="11.3" width="1.8" height="6.8" fill="#1ea04a"/><rect x="16" y="11.3" width="1.8" height="6.8" fill="#1ea04a"/></svg>
<div class="lb" style="top:42.7px">瞬时流量<span style="margin-left:1.3px">:</span></div><div class="vl" style="top:42.7px;left:98.5px">2.45&nbsp;<span style="margin-left:4.4px">m</span>³/s</div>
<div class="lb" style="top:58px">累计流量<span style="margin-left:1.3px">:</span></div><div class="vl" style="top:58px;left:98.5px">104981.25&nbsp;<span style="margin-left:4.4px">m</span>³</div>
<div class="lb" style="top:73.8px">流速<span style="margin-left:1.3px">:</span></div><div class="vl" style="top:73.8px;left:98.5px">0.90&nbsp;<span style="margin-left:4.4px">m</span>/s</div>
<div class="lb" style="top:89.2px">水位<span style="margin-left:1.3px">:</span></div><div class="vl" style="top:89.2px;left:98.5px">1.55&nbsp;<span style="margin-left:4.4px">m</span></div></div>
<div class="card c" style="left:6.10px;top:323.80px"><div class="h"><span style="letter-spacing:.55px">xx</span>灌区4斗渠</div><div class="tm">采集时间<span style="margin-left:.9px">:</span><span style="font-size:7.5px;margin-left:3.9px">2024-12-12 16:30:08</span></div><div class="ln"></div><svg width="20" height="20" viewBox="0 0 20 20"><circle cx="8.8" cy="5.4" r="4.6" fill="#fff" stroke="#1ea04a" stroke-width="1.5"/><rect x="5.9" y="3.5" width="5.8" height="3.9" rx="1.3" fill="#c6e8cf" stroke="#1ea04a" stroke-width=".5"/><path d="M6.6 4.9h4.4M6.6 6.1h4.4" stroke="#1ea04a" stroke-width=".5"/><rect x="7.9" y="10.4" width="1.8" height="1.8" fill="#1ea04a"/><rect x="6.2" y="12" width="5.4" height="5.3" fill="#1ea04a"/><rect x="1.8" y="13.2" width="2.9" height="3.1" fill="#1ea04a"/><rect x="13.2" y="13.2" width="2.9" height="3.1" fill="#1ea04a"/><rect x="0.3" y="11.3" width="1.8" height="6.8" fill="#1ea04a"/><rect x="16" y="11.3" width="1.8" height="6.8" fill="#1ea04a"/></svg>
<div class="lb" style="top:42.7px">瞬时流量<span style="margin-left:1.3px">:</span></div><div class="vl" style="top:42.7px;left:98.5px">0.79&nbsp;<span style="margin-left:4.4px">m</span>³/s</div>
<div class="lb" style="top:58px">累计流量<span style="margin-left:1.3px">:</span></div><div class="vl" style="top:58px;left:98.5px">105087.13&nbsp;<span style="margin-left:4.4px">m</span>³</div>
<div class="lb" style="top:73.8px">流速<span style="margin-left:1.3px">:</span></div><div class="vl" style="top:73.8px;left:98.5px">1.96&nbsp;<span style="margin-left:4.4px">m</span>/s</div>
<div class="lb" style="top:89.2px">水位<span style="margin-left:1.3px">:</span></div><div class="vl" style="top:89.2px;left:98.5px">1.78&nbsp;<span style="margin-left:4.4px">m</span></div></div>
<div class="card c" style="left:208.65px;top:323.80px"><div class="h"><span style="letter-spacing:.55px">xx</span>灌区5斗渠</div><div class="tm">采集时间<span style="margin-left:.9px">:</span><span style="font-size:7.5px;margin-left:3.9px">2024-12-12 16:30:09</span></div><div class="ln"></div><svg width="20" height="20" viewBox="0 0 20 20"><circle cx="8.8" cy="5.4" r="4.6" fill="#fff" stroke="#1ea04a" stroke-width="1.5"/><rect x="5.9" y="3.5" width="5.8" height="3.9" rx="1.3" fill="#c6e8cf" stroke="#1ea04a" stroke-width=".5"/><path d="M6.6 4.9h4.4M6.6 6.1h4.4" stroke="#1ea04a" stroke-width=".5"/><rect x="7.9" y="10.4" width="1.8" height="1.8" fill="#1ea04a"/><rect x="6.2" y="12" width="5.4" height="5.3" fill="#1ea04a"/><rect x="1.8" y="13.2" width="2.9" height="3.1" fill="#1ea04a"/><rect x="13.2" y="13.2" width="2.9" height="3.1" fill="#1ea04a"/><rect x="0.3" y="11.3" width="1.8" height="6.8" fill="#1ea04a"/><rect x="16" y="11.3" width="1.8" height="6.8" fill="#1ea04a"/></svg>
<div class="lb" style="top:42.7px">瞬时流量<span style="margin-left:1.3px">:</span></div><div class="vl" style="top:42.7px;left:98.5px">0.55&nbsp;<span style="margin-left:4.4px">m</span>³/s</div>
<div class="lb" style="top:58px">累计流量<span style="margin-left:1.3px">:</span></div><div class="vl" style="top:58px;left:98.5px">105097.01&nbsp;<span style="margin-left:4.4px">m</span>³</div>
<div class="lb" style="top:73.8px">流速<span style="margin-left:1.3px">:</span></div><div class="vl" style="top:73.8px;left:98.5px">2.45&nbsp;<span style="margin-left:4.4px">m</span>/s</div>
<div class="lb" style="top:89.2px">水位<span style="margin-left:1.3px">:</span></div><div class="vl" style="top:89.2px;left:98.5px">0.51&nbsp;<span style="margin-left:4.4px">m</span></div></div>
<div class="card c" style="left:411.20px;top:323.80px"><div class="h"><span style="letter-spacing:.55px">xx</span>灌区6斗渠</div><div class="tm">采集时间<span style="margin-left:.9px">:</span><span style="font-size:7.5px;margin-left:3.9px">2024-12-12 16:30:09</span></div><div class="ln"></div><svg width="20" height="20" viewBox="0 0 20 20"><circle cx="8.8" cy="5.4" r="4.6" fill="#fff" stroke="#1ea04a" stroke-width="1.5"/><rect x="5.9" y="3.5" width="5.8" height="3.9" rx="1.3" fill="#c6e8cf" stroke="#1ea04a" stroke-width=".5"/><path d="M6.6 4.9h4.4M6.6 6.1h4.4" stroke="#1ea04a" stroke-width=".5"/><rect x="7.9" y="10.4" width="1.8" height="1.8" fill="#1ea04a"/><rect x="6.2" y="12" width="5.4" height="5.3" fill="#1ea04a"/><rect x="1.8" y="13.2" width="2.9" height="3.1" fill="#1ea04a"/><rect x="13.2" y="13.2" width="2.9" height="3.1" fill="#1ea04a"/><rect x="0.3" y="11.3" width="1.8" height="6.8" fill="#1ea04a"/><rect x="16" y="11.3" width="1.8" height="6.8" fill="#1ea04a"/></svg>
<div class="lb" style="top:42.7px">瞬时流量<span style="margin-left:1.3px">:</span></div><div class="vl" style="top:42.7px;left:98.5px">0.96&nbsp;<span style="margin-left:4.4px">m</span>³/s</div>
<div class="lb" style="top:58px">累计流量<span style="margin-left:1.3px">:</span></div><div class="vl" style="top:58px;left:98.5px">105033.64&nbsp;<span style="margin-left:4.4px">m</span>³</div>
<div class="lb" style="top:73.8px">流速<span style="margin-left:1.3px">:</span></div><div class="vl" style="top:73.8px;left:98.5px">2.35&nbsp;<span style="margin-left:4.4px">m</span>/s</div>
<div class="lb" style="top:89.2px">水位<span style="margin-left:1.3px">:</span></div><div class="vl" style="top:89.2px;left:98.5px">0.91&nbsp;<span style="margin-left:4.4px">m</span></div></div>
<div class="card c" style="left:613.75px;top:323.80px"><div class="h"><span style="letter-spacing:.55px">xx</span>灌区7斗渠</div><div class="tm">采集时间<span style="margin-left:.9px">:</span><span style="font-size:7.5px;margin-left:3.9px">2024-12-12 16:30:09</span></div><div class="ln"></div><svg width="20" height="20" viewBox="0 0 20 20"><circle cx="8.8" cy="5.4" r="4.6" fill="#fff" stroke="#1ea04a" stroke-width="1.5"/><rect x="5.9" y="3.5" width="5.8" height="3.9" rx="1.3" fill="#c6e8cf" stroke="#1ea04a" stroke-width=".5"/><path d="M6.6 4.9h4.4M6.6 6.1h4.4" stroke="#1ea04a" stroke-width=".5"/><rect x="7.9" y="10.4" width="1.8" height="1.8" fill="#1ea04a"/><rect x="6.2" y="12" width="5.4" height="5.3" fill="#1ea04a"/><rect x="1.8" y="13.2" width="2.9" height="3.1" fill="#1ea04a"/><rect x="13.2" y="13.2" width="2.9" height="3.1" fill="#1ea04a"/><rect x="0.3" y="11.3" width="1.8" height="6.8" fill="#1ea04a"/><rect x="16" y="11.3" width="1.8" height="6.8" fill="#1ea04a"/></svg>
<div class="lb" style="top:42.7px">瞬时流量<span style="margin-left:1.3px">:</span></div><div class="vl" style="top:42.7px;left:98.5px">1.04&nbsp;<span style="margin-left:4.4px">m</span>³/s</div>
<div class="lb" style="top:58px">累计流量<span style="margin-left:1.3px">:</span></div><div class="vl" style="top:58px;left:98.5px">104760.60&nbsp;<span style="margin-left:4.4px">m</span>³</div>
<div class="lb" style="top:73.8px">流速<span style="margin-left:1.3px">:</span></div><div class="vl" style="top:73.8px;left:98.5px">2.08&nbsp;<span style="margin-left:4.4px">m</span>/s</div>
<div class="lb" style="top:89.2px">水位<span style="margin-left:1.3px">:</span></div><div class="vl" style="top:89.2px;left:98.5px">1.23&nbsp;<span style="margin-left:4.4px">m</span></div></div>
<div class="card c" style="left:816.30px;top:323.80px"><div class="h"><span style="letter-spacing:.55px">xx</span>灌区8斗渠</div><div class="tm">采集时间<span style="margin-left:.9px">:</span><span style="font-size:7.5px;margin-left:3.9px">2024-12-12 16:30:10</span></div><div class="ln"></div><svg width="20" height="20" viewBox="0 0 20 20"><circle cx="8.8" cy="5.4" r="4.6" fill="#fff" stroke="#1ea04a" stroke-width="1.5"/><rect x="5.9" y="3.5" width="5.8" height="3.9" rx="1.3" fill="#c6e8cf" stroke="#1ea04a" stroke-width=".5"/><path d="M6.6 4.9h4.4M6.6 6.1h4.4" stroke="#1ea04a" stroke-width=".5"/><rect x="7.9" y="10.4" width="1.8" height="1.8" fill="#1ea04a"/><rect x="6.2" y="12" width="5.4" height="5.3" fill="#1ea04a"/><rect x="1.8" y="13.2" width="2.9" height="3.1" fill="#1ea04a"/><rect x="13.2" y="13.2" width="2.9" height="3.1" fill="#1ea04a"/><rect x="0.3" y="11.3" width="1.8" height="6.8" fill="#1ea04a"/><rect x="16" y="11.3" width="1.8" height="6.8" fill="#1ea04a"/></svg>
<div class="lb" style="top:42.7px">瞬时流量<span style="margin-left:1.3px">:</span></div><div class="vl" style="top:42.7px;left:98.5px">2.47&nbsp;<span style="margin-left:4.4px">m</span>³/s</div>
<div class="lb" style="top:58px">累计流量<span style="margin-left:1.3px">:</span></div><div class="vl" style="top:58px;left:98.5px">104926.71&nbsp;<span style="margin-left:4.4px">m</span>³</div>
<div class="lb" style="top:73.8px">流速<span style="margin-left:1.3px">:</span></div><div class="vl" style="top:73.8px;left:98.5px">0.56&nbsp;<span style="margin-left:4.4px">m</span>/s</div>
<div class="lb" style="top:89.2px">水位<span style="margin-left:1.3px">:</span></div><div class="vl" style="top:89.2px;left:98.5px">0.68&nbsp;<span style="margin-left:4.4px">m</span></div></div>

  </div>
</div>
</body></html>
